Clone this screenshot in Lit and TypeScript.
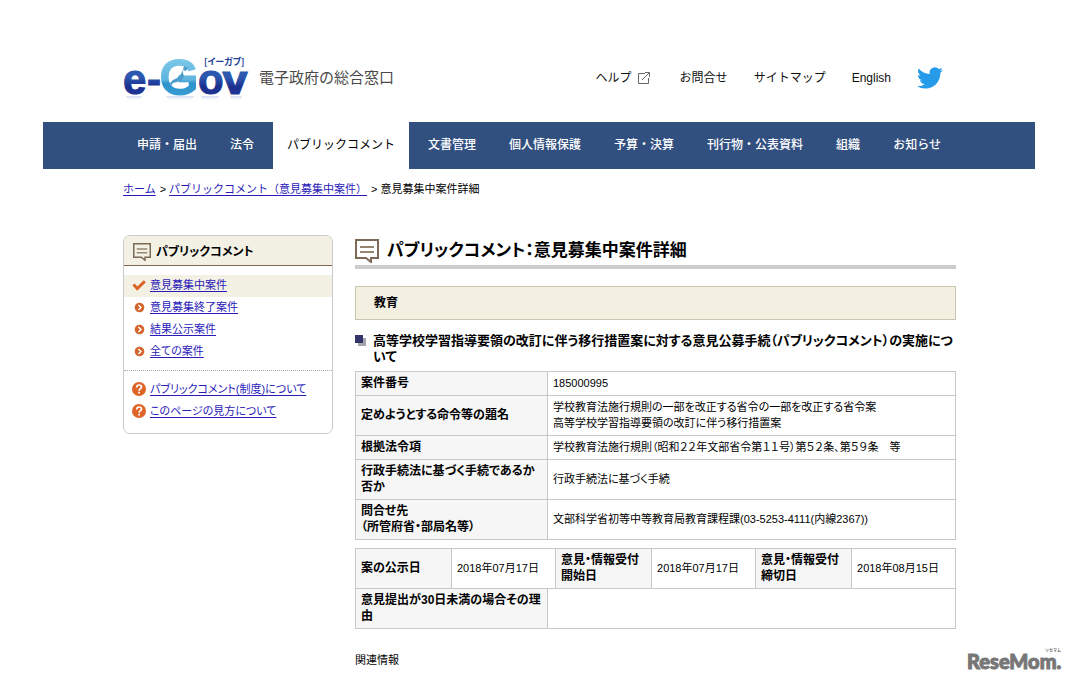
import { LitElement, html, css, svg, nothing } from "lit";
import { customElement, property } from "lit/decorators.js";
import { classMap } from "lit/directives/class-map.js";

type Kind = "check" | "arrow" | "help";

@customElement("speech-icon")
class SpeechIcon extends LitElement {
  static styles = css`
    :host { display: block; flex: none; }
    svg { display: block; width: 100%; height: 100%; }
  `;
  render() {
    return html`<svg viewBox="0 0 24 24" fill="none" stroke="#7d6a56" aria-hidden="true">
      <path d="M1 1h22v18h-7v4l-5-4H1z" stroke-width="2"/>
      <path d="M5 8h14M5 13h14" stroke-width="2" stroke="#97866f"/>
    </svg>`;
  }
}

@customElement("marker-icon")
class MarkerIcon extends LitElement {
  @property() kind: Kind = "arrow";
  static styles = css`
    :host { display: block; width: 14px; height: 14px; flex: none; }
    svg { display: block; width: 100%; height: 100%; }
  `;
  render() {
    const shape =
      this.kind === "check"
        ? svg`<path d="M1.500 6.500 5.300 10.500 12.800 3.200" fill="none" stroke="#db6327" stroke-width="3"/>`
        : this.kind === "help"
          ? svg`<circle cx="7" cy="7" r="7" fill="#df6428"/><path d="M4.700 5.500c0-1.700 1-2.500 2.400-2.500 1.500 0 2.400.8 2.400 2 0 1.900-2.400 1.700-2.400 3.700M7.100 9.800v1.800" fill="none" stroke="#fff" stroke-width="1.700"/>`
          : svg`<circle cx="7.500" cy="7.500" r="4.800" fill="#d4652e"/><path d="M6.400 5.100 9 7.500 6.400 9.900" fill="none" stroke="#fff" stroke-width="1.400"/>`;
    return html`<svg viewBox="0 0 14 14" aria-hidden="true">${shape}</svg>`;
  }
}

@customElement("app-root")
class AppRoot extends LitElement {
  static styles = css`
    :host {
      display: block;
      position: relative;
      min-height: 100vh;
      box-sizing: border-box;
      background: #fff;
      color: #000;
      font-family: "Liberation Sans", "Noto Sans CJK JP", sans-serif;
      font-size: 11px;
      line-height: 16px;
    }
    ul, ol { list-style: none; margin: 0; padding: 0; }
    h1, h2, h3, p { margin: 0; }
    .page { margin: 0 42px 0 43px; }

    .header {
      display: flex;
      align-items: center;
      justify-content: space-between;
      height: 122px;
      padding: 34px 92px 0 80px;
      box-sizing: border-box;
    }
    .brand { display: flex; align-items: center; gap: 9px; }
    .logo { display: block; width: 127px; height: 50px; overflow: visible; }
    .logo-dark { font: bold 42px "Liberation Sans", Arial, sans-serif; stroke-width: 1; }
    .logo-wide { font: bold 40px "DejaVu Sans", sans-serif; }
    .logo-big { font: 49px "Liberation Sans", Arial, sans-serif; stroke-width: 3; }
    .logo-ruby { font: bold 9px "Noto Sans CJK JP", sans-serif; fill: #1d3f96; font-feature-settings: "palt"; }
    .tagline { font-size: 15px; line-height: 20px; color: #4a4a4a; }
    .tools { display: flex; align-items: center; gap: 26px; font-size: 12px; }
    .tools a { color: #111; text-decoration: none; }
    .tools .help { display: flex; align-items: center; gap: 6px; margin-right: 4px; }
    .ext { display: block; width: 12px; height: 12px; }
    .bird { display: block; width: 26px; height: 26px; }

    .nav { background: #32507f; }
    .nav ul { display: flex; gap: 1px; padding: 0 78px; }
    .nav a {
      display: block;
      padding: 0 16px;
      font-size: 12px;
      line-height: 47px;
      font-weight: 500;
      color: #fff;
      text-decoration: none;
      white-space: nowrap;
    }
    .nav .current { margin: 0 2px; padding: 0 14px; background: #fff; color: #000; font-weight: 400; }

    .crumbs { padding: 12px 80px 0; }
    .crumbs ol { display: flex; gap: 3px; }
    .crumbs li { display: flex; gap: 4px; }
    a { color: #2a1ab9; text-underline-offset: 2px; }

    .columns { display: flex; align-items: flex-start; gap: 22px; padding: 38px 79px 0 80px; }

    .side {
      width: 210px;
      flex: none;
      box-sizing: border-box;
      border: 1px solid #ccc;
      border-radius: 7px;
      overflow: hidden;
      font-feature-settings: "palt";
    }
    .side h2 {
      display: flex;
      align-items: center;
      gap: 5px;
      height: 30px;
      padding: 3px 9px 0;
      box-sizing: border-box;
      font-size: 12px;
      background: #f3f0e4;
      border-bottom: 1px solid #7d6558;
    }
    .side speech-icon { width: 18px; height: 18px; }
    .side ul { padding: 9px 0 7px; }
    .side ul + ul { padding: 8px 0 10px; border-top: 1px dotted #aaa; }
    .side li { display: flex; align-items: center; gap: 4px; height: 22px; padding: 0 8px 2px; box-sizing: border-box; }
    .side .current { background: #f3f0e4; }

    .main { flex: 1; min-width: 0; font-feature-settings: "palt"; }
    .title {
      display: flex;
      align-items: center;
      gap: 8px;
      padding-top: 2px;
      padding-bottom: 1px;
      border-bottom: 4px solid #ccc;
      font-size: 17px;
      line-height: 27px;
    }
    .title speech-icon { width: 24px; height: 24px; }
    .category {
      margin-top: 17px;
      padding: 0 18px;
      border: 1px solid #c9c5b0;
      background: #f3f0e2;
      font-size: 12px;
      line-height: 32px;
      font-weight: bold;
    }
    .subject { display: flex; gap: 7px; margin: 13px 0 6px; font-size: 13px; line-height: 16px; }
    .squares { display: block; width: 11px; height: 11px; margin-top: 2px; flex: none; }

    table { width: 100%; border-collapse: collapse; table-layout: fixed; margin-bottom: 8px; }
    th, td { border: 1px solid #c8c8c8; padding: 3px 5px 4px; text-align: left; vertical-align: middle; }
    th { background: #f6f6f6; font-size: 12px; line-height: 16px; }
    .w-label { width: 192px; }
    .w-term { width: 96px; }
    .w-date { width: 104px; }
    .w-step { width: 8px; }
    .related { padding-top: 15px; }

    .watermark { position: absolute; right: 11px; bottom: 10px; display: block; width: 100px; height: 26px; }
    .mark { font: 900 20px Lato, sans-serif; fill: #777; stroke: #777; stroke-width: 1; }
    .mark-ruby { font: bold 4px "Noto Sans CJK JP", sans-serif; fill: #777; }
  `;

  private nav = ["申請・届出", "法令", "パブリックコメント", "文書管理", "個人情報保護", "予算・決算", "刊行物・公表資料", "組織", "お知らせ"];

  private menu: [Kind, string][] = [
    ["check", "意見募集中案件"],
    ["arrow", "意見募集終了案件"],
    ["arrow", "結果公示案件"],
    ["arrow", "全ての案件"],
  ];

  private guides: [Kind, string][] = [
    ["help", "パブリックコメント(制度)について"],
    ["help", "このページの見方について"],
  ];

  private details: [string[], string[]][] = [
    [["案件番号"], ["185000995"]],
    [["定めようとする命令等の題名"], ["学校教育法施行規則の一部を改正する省令の一部を改正する省令案", "高等学校学習指導要領の改訂に伴う移行措置案"]],
    [["根拠法令項"], ["学校教育法施行規則（昭和２２年文部省令第１１号）第５２条、第５９条　等"]],
    [["行政手続法に基づく手続であるか否か"], ["行政手続法に基づく手続"]],
    [["問合せ先", "（所管府省・部局名等）"], ["文部科学省初等中等教育局教育課程課(03-5253-4111(内線2367))"]],
  ];

  private lines(parts: string[]) {
    return parts.map((p, i) => html`${i ? html`<br>` : nothing}${p}`);
  }

  private list(items: [Kind, string][]) {
    return html`<ul>${items.map(([kind, label]) => html`
      <li class=${classMap({ current: kind === "check" })}><marker-icon .kind=${kind}></marker-icon><a href="#">${label}</a></li>`)}</ul>`;
  }

  private logo() {
    return html`<svg class="logo" viewBox="0 0 127 50" role="img" aria-label="e-Gov">
      <defs>
        <linearGradient id="dark" x1="0" y1="0" x2="0" y2="1">
          <stop offset="0.450" stop-color="#2b57ae"/><stop offset="0.650" stop-color="#1c2f8e"/><stop offset="1" stop-color="#20399a"/>
        </linearGradient>
        <linearGradient id="light" x1="0" y1="0" x2="0" y2="1">
          <stop offset="0.200" stop-color="#79c6e8"/><stop offset="0.550" stop-color="#5fb4de"/><stop offset="0.620" stop-color="#2f93cd"/><stop offset="1" stop-color="#3fa3d8"/>
        </linearGradient>
        <linearGradient id="fade" x1="0" y1="0" x2="0" y2="1">
          <stop offset="0" stop-color="#8fa6dc" stop-opacity="0.400"/><stop offset="1" stop-color="#fff" stop-opacity="0"/>
        </linearGradient>
      </defs>
      <path d="M3 43h16l-3 6H6zM43 43h28l-4 6H47zM78 43h18l-3 6H81zM107 43h12l-2 6h-8z" fill="url(#fade)"/>
      <g class="logo-dark" fill="url(#dark)" stroke="url(#dark)">
        <text x="0" y="41">e</text><text x="24" y="41">-</text><text x="75" y="41">o</text><text class="logo-wide" x="99" y="41">v</text>
      </g>
      <text class="logo-big" x="37" y="41" fill="url(#light)" stroke="url(#light)">G</text>
      <path d="M61 13l4 2-2 3-3-1 0 3 1 3-2 4-5 2-4 1-2 3-1-3 3-3 4-2 4-4 2-4z" fill="#4d9fce"/>
      <text class="logo-ruby" x="81" y="12">[イーガブ]</text>
    </svg>`;
  }

  render() {
    return html`
      <div class="page">
        <header class="header">
          <div class="brand">${this.logo()}<span class="tagline">電子政府の総合窓口</span></div>
          <div class="tools">
            <a class="help" href="#">ヘルプ
              <svg class="ext" viewBox="0 0 12 12" fill="none" stroke="#666" aria-hidden="true"><path d="M7 1.500H.5v10h10V6M4 8l7-7M7 .5h4.500V5"/></svg></a>
            <a href="#">お問合せ</a>
            <a href="#">サイトマップ</a>
            <a href="#">English</a>
            <a href="#" aria-label="Twitter"><svg class="bird" viewBox="0 0 24 24" fill="#259bea" aria-hidden="true"><path d="M23.953 4.570a10 10 0 01-2.825.775 4.958 4.958 0 002.163-2.723c-.951.555-2.005.959-3.127 1.184a4.920 4.920 0 00-8.384 4.482C7.690 8.095 4.067 6.130 1.640 3.162a4.822 4.822 0 00-.666 2.475c0 1.710.870 3.213 2.188 4.096a4.904 4.904 0 01-2.228-.616v.060a4.923 4.923 0 003.946 4.827 4.996 4.996 0 01-2.212.085 4.936 4.936 0 004.604 3.417 9.867 9.867 0 01-6.102 2.105c-.390 0-.779-.023-1.170-.067a13.995 13.995 0 007.557 2.209c9.053 0 13.998-7.496 13.998-13.985 0-.210 0-.420-.015-.630A9.935 9.935 0 0024 4.590z"/></svg></a>
          </div>
        </header>
        <nav class="nav"><ul>${this.nav.map((label, i) => html`<li><a class=${classMap({ current: i === 2 })} href="#">${label}</a></li>`)}</ul></nav>
        <nav class="crumbs"><ol>
          <li><a href="#">ホーム</a><span>&gt;</span></li>
          <li><a href="#">パブリックコメント（意見募集中案件）</a><span>&gt;</span></li>
          <li>意見募集中案件詳細</li>
        </ol></nav>
        <div class="columns">
          <aside class="side">
            <h2><speech-icon></speech-icon>パブリックコメント</h2>
            ${this.list(this.menu)}${this.list(this.guides)}
          </aside>
          <main class="main">
            <h1 class="title"><speech-icon></speech-icon><span>パブリックコメント：意見募集中案件詳細</span></h1>
            <p class="category">教育</p>
            <h2 class="subject">
              <svg class="squares" viewBox="0 0 11 11" aria-hidden="true"><path d="M3 3h8v8H3z" fill="#a3a3ad"/><path d="M0 0h8v8H0z" fill="#34346c"/></svg>
              <span>高等学校学習指導要領の改訂に伴う移行措置案に対する意見公募手続（パブリックコメント）の実施について</span>
            </h2>
            <table>
              <colgroup><col class="w-label"><col></colgroup>
              <tbody>${this.details.map(([head, body]) => html`<tr><th scope="row">${this.lines(head)}</th><td>${this.lines(body)}</td></tr>`)}</tbody>
            </table>
            <table>
              <colgroup><col class="w-term"><col class="w-term"><col class="w-step"><col class="w-term"><col class="w-date"><col class="w-term"><col></colgroup>
              <tbody>
                <tr>
                  <th scope="row">案の公示日</th><td colspan="2">2018年07月17日</td>
                  <th scope="row">意見・情報受付開始日</th><td>2018年07月17日</td>
                  <th scope="row">意見・情報受付締切日</th><td>2018年08月15日</td>
                </tr>
                <tr><th scope="row" colspan="2">意見提出が30日未満の場合その理由</th><td colspan="5"></td></tr>
              </tbody>
            </table>
            <p class="related">関連情報</p>
          </main>
        </div>
      </div>
      <svg class="watermark" viewBox="0 0 100 26" role="img" aria-label="ReseMom">
        <text class="mark" x="1" y="21">ReseMom.</text>
        <text class="mark-ruby" x="79" y="4">リセマム</text>
      </svg>`;
  }
}
